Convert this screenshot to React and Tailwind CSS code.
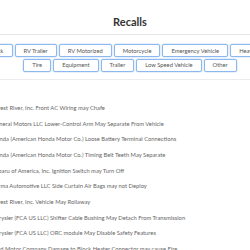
import React from "react";

const row1 = ["Truck", "RV Trailer", "RV Motorized", "Motorcycle", "Emergency Vehicle", "Heavy Truck"];
const row2 = ["Tire", "Equipment", "Trailer", "Low Speed Vehicle", "Other"];
const items = [
  "Forest River, Inc. Front AC Wiring may Chafe",
  "General Motors LLC Lower-Control Arm May Separate From Vehicle",
  "Honda (American Honda Motor Co.) Loose Battery Terminal Connections",
  "Honda (American Honda Motor Co.) Timing Belt Teeth May Separate",
  "Subaru of America, Inc. Ignition Switch may Turn Off",
  "Forma Automotive LLC Side Curtain Air Bags may not Deploy",
  "Forest River, Inc. Vehicle May Rollaway",
  "Chrysler (FCA US LLC) Shifter Cable Bushing May Detach From Transmission",
  "Chrysler (FCA US LLC) ORC module May Disable Safety Features",
  "Ford Motor Company Damage to Block Heater Connector may cause Fire",
];

function Btn({ label }) {
  return (
    <div className="shrink-0 h-[13px] px-[8px] flex items-center justify-center whitespace-nowrap rounded-[2px] border border-[#8bb8ef] shadow-[0_0_0_0.5px_#d3e4fa] bg-white text-[5.8px] leading-none text-[#555]">
      {label}
    </div>
  );
}

export default function App() {
  return (
    <div className="w-[250px] h-[250px] overflow-hidden bg-white" style={{ fontFamily: "Lato, 'Noto Sans', sans-serif" }}>
      <div className="w-[300px] -ml-[20px]">
        <div className="h-[35px] border-b border-[#e5e5e5] flex items-center justify-center pt-[8px]">
          <span className="text-[11px] font-bold text-[#333] leading-none">Recalls</span>
        </div>
        <div className="h-[45px] border-b border-[#ececec] pt-[9px] flex flex-col gap-[1.5px]">
          <div className="flex justify-center gap-[2px]">
            {row1.map((l) => <Btn key={l} label={l} />)}
          </div>
          <div className="flex justify-center gap-[2px]">
            {row2.map((l) => <Btn key={l} label={l} />)}
          </div>
        </div>
        <div className="pt-[20px] pl-[12px] flex flex-col">
          {items.map((t) => (
            <div key={t} className="h-[15.7px] flex items-center whitespace-nowrap text-[5.8px] text-[#666] leading-none">
              {t}
            </div>
          ))}
        </div>
      </div>
    </div>
  );
}
